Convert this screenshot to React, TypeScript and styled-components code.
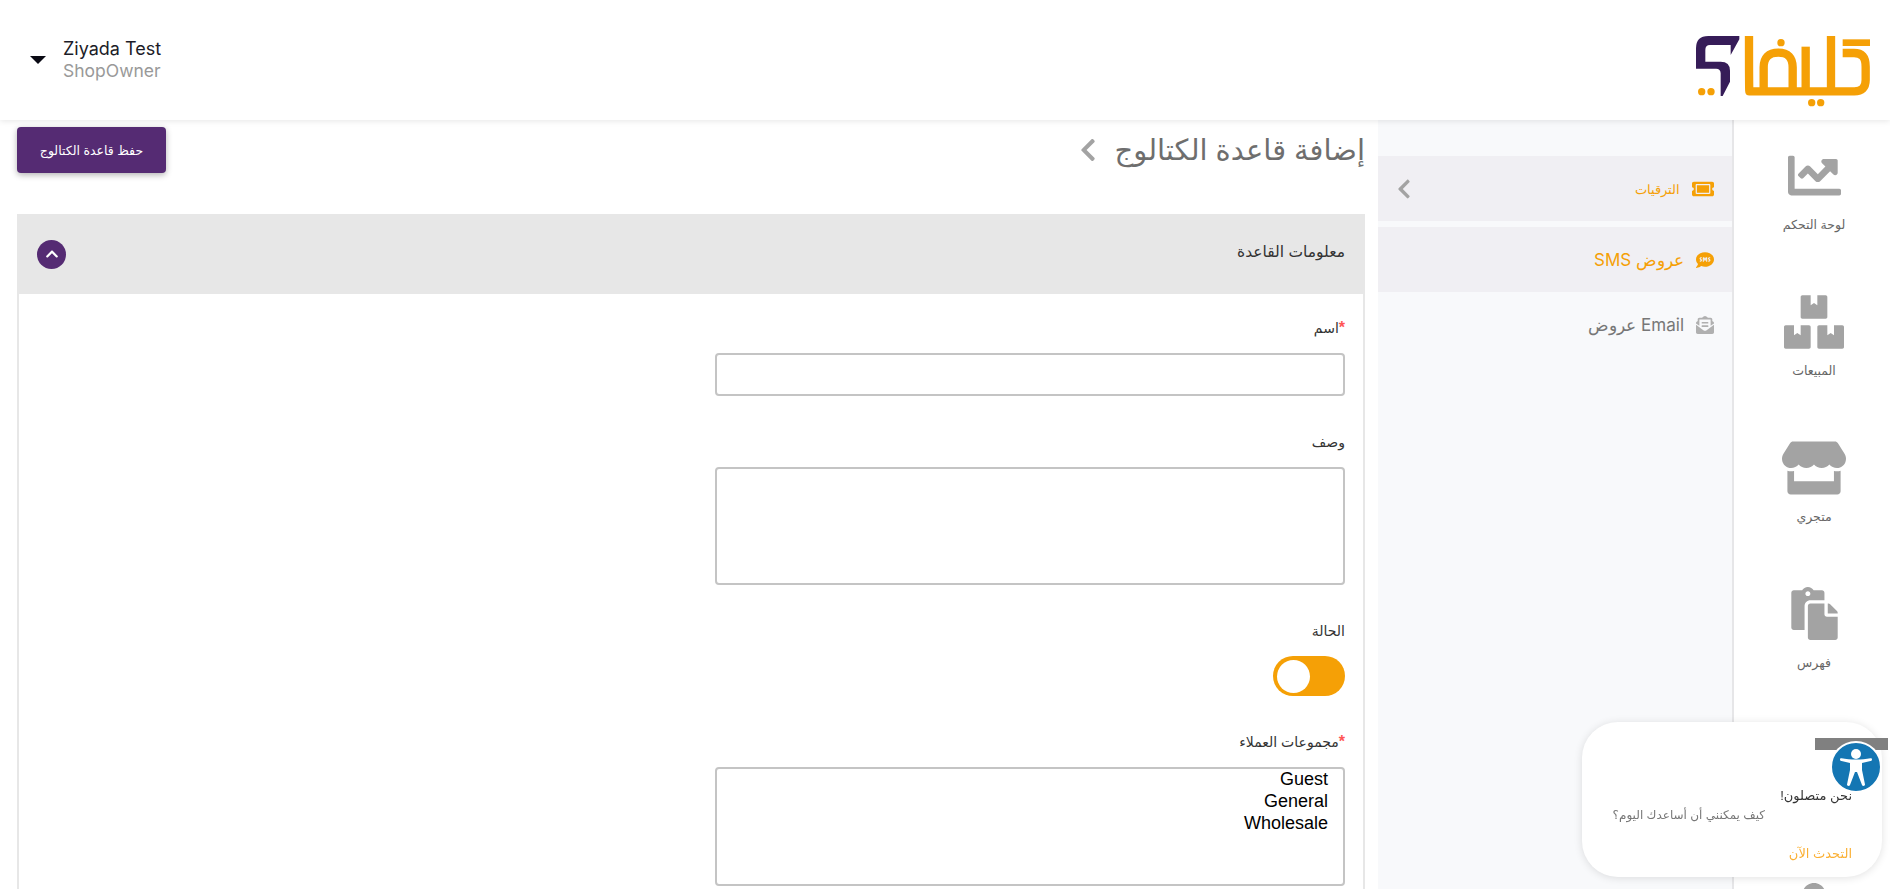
import React from "react";
import styled, { createGlobalStyle } from "styled-components";
import {
  FaBoxes,
  FaChartLine,
  FaChevronLeft,
  FaChevronUp,
  FaEnvelopeOpenText,
  FaPaste,
  FaSms,
  FaStore,
  FaTicketAlt,
  FaUsers,
} from "react-icons/fa";

const ORANGE = "#f5a006";
const PURPLE = "#552b73";

const GlobalStyle = createGlobalStyle`
  html, body {
    margin: 0;
    height: 100%;
    overflow: hidden;
    background: #fff;
    font-family: "Liberation Sans", "DejaVu Sans", sans-serif;
  }
  * { box-sizing: border-box; }
`;

const Page = styled.div`
  height: 889px;
  display: flex;
  flex-direction: column;
  overflow: hidden;
`;

const Header = styled.header`
  height: 120px;
  flex: none;
  display: flex;
  align-items: center;
  justify-content: space-between;
  padding: 0 0 0 30px;
  background: #fff;
  box-shadow: 0 1px 6px rgba(0, 0, 0, 0.1);
  position: relative;
  z-index: 2;
`;

const LogoWrap = styled.div`
  margin-top: 10px;
  svg {
    display: block;
  }
`;

const UserMenu = styled.div`
  display: flex;
  align-items: center;
  gap: 17px;
`;

const Caret = styled.span`
  width: 0;
  height: 0;
  border-left: 8px solid transparent;
  border-right: 8px solid transparent;
  border-top: 8px solid #0a0a14;
`;

const UserText = styled.div`
  direction: ltr;
  font-family: Inter, "Liberation Sans", sans-serif;
  line-height: 22px;
`;

const UserName = styled.div`
  font-size: 18px;
  color: #1c1c28;
`;

const UserRole = styled.div`
  font-size: 17.5px;
  color: #999;
`;

const Body = styled.div`
  flex: 1;
  min-height: 0;
  display: flex;
`;

const Rail = styled.nav`
  width: 158px;
  flex: none;
  padding-left: 4px;
  border-left: 2px solid #e6e6e8;
  overflow: hidden;
`;

const RailItem = styled.a`
  height: 146px;
  padding-top: 29px;
  display: flex;
  flex-direction: column;
  align-items: center;
  gap: 13px;
`;

const RailIcon = styled.span`
  height: 53px;
  display: flex;
  align-items: center;
  justify-content: center;
  color: #a3a3a3;
`;

const RailLabel = styled.span`
  height: 20px;
  line-height: 20px;
  font-size: 12.5px;
  color: #666;
`;

const SubNav = styled.aside`
  width: 354px;
  flex: none;
  padding-top: 36px;
  display: flex;
  flex-direction: column;
  background: #f8f9fb;
`;

const SubItem = styled.a<{ $active?: boolean; $small?: boolean }>`
  height: 65px;
  flex: none;
  display: flex;
  align-items: center;
  gap: 12px;
  padding: 0 18px 0 15px;
  background: ${(p) => (p.$active ? "#f0eff3" : "transparent")};
  color: ${(p) => (p.$active ? ORANGE : "#777")};
  font-family: Inter, "Liberation Sans", sans-serif;
  font-size: ${(p) => (p.$small ? "13px" : "17px")};
  &:first-child {
    margin-bottom: 6px;
  }
  &:last-child {
    height: 66px;
  }
  svg {
    flex: none;
    color: ${(p) => (p.$active ? ORANGE : "#b0b0b0")};
  }
`;

const SubChevron = styled(FaChevronLeft)`
  margin-right: auto;
  && {
    color: #a3a3a3;
  }
`;

const Main = styled.main`
  flex: 1;
  min-width: 0;
  padding: 0 13px 0 17px;
  overflow: hidden;
  background: #fff;
`;

const TitleRow = styled.div`
  height: 94px;
  display: flex;
  justify-content: space-between;
  align-items: flex-start;
`;

const Title = styled.h1`
  margin: 12px 0 0;
  display: flex;
  align-items: center;
  gap: 14px;
  font-size: 29px;
  line-height: 36px;
  font-weight: 400;
  color: #6e6e6e;
  svg {
    color: #a3a3a3;
  }
`;

const SaveButton = styled.button`
  width: 149px;
  height: 46px;
  margin-top: 7px;
  border: 0;
  border-radius: 4px;
  background: ${PURPLE};
  color: #fff;
  font-family: inherit;
  font-size: 12.5px;
  box-shadow: 0 2px 6px rgba(0, 0, 0, 0.3);
`;

const Card = styled.section`
  border: 2px solid #e7e7e7;
  border-top: 0;
`;

const CardHeader = styled.div`
  height: 80px;
  margin: 0 -2px;
  padding: 0 20px;
  display: flex;
  align-items: center;
  justify-content: space-between;
  background: #e7e7e7;
`;

const CardTitle = styled.span`
  padding-bottom: 5px;
  font-size: 15.5px;
  color: #333;
`;

const Collapse = styled.span`
  width: 29px;
  height: 29px;
  border-radius: 50%;
  background: ${PURPLE};
  color: #fff;
  display: flex;
  align-items: center;
  justify-content: center;
  font-size: 14px;
`;

const CardBody = styled.div`
  padding: 24px 18px 40px;
`;

const Field = styled.div`
  width: 630px;
  margin-bottom: 36px;
`;

const Label = styled.label`
  display: block;
  height: 20px;
  line-height: 20px;
  margin-bottom: 15px;
  font-size: 14px;
  color: #333;
`;

const Required = styled.span`
  color: #f55;
  font-size: 16px;
  font-weight: 700;
`;

const TextInput = styled.input`
  display: block;
  width: 100%;
  height: 43px;
  border: 2px solid #c4c4c4;
  border-radius: 4px;
  background: #fff;
`;

const TextArea = styled.textarea`
  display: block;
  width: 100%;
  height: 118px;
  border: 2px solid #c4c4c4;
  border-radius: 4px;
  resize: none;
`;

const Toggle = styled.span`
  width: 72px;
  height: 40px;
  padding: 3.5px 4px;
  display: flex;
  justify-content: flex-end;
  border-radius: 20px;
  background: ${ORANGE};
`;

const Thumb = styled.span`
  width: 33px;
  height: 33px;
  border-radius: 50%;
  background: #fff;
`;

const ListBox = styled.select`
  display: block;
  width: 100%;
  height: 119px;
  padding: 0 13px;
  border: 2px solid #c4c4c4;
  border-radius: 4px;
  background: #fff;
  font-family: "Liberation Sans", sans-serif;
  font-size: 18px;
  line-height: 22px;
  color: #000;
  overflow: hidden;
  option {
    min-height: 22px;
    padding: 0 2px;
  }
`;

const Chat = styled.div`
  position: fixed;
  left: 1582px;
  top: 722px;
  width: 300px;
  height: 155px;
  padding: 64px 30px 0;
  border-radius: 36px;
  background: #fff;
  box-shadow: 0 1px 8px rgba(0, 0, 0, 0.12);
  z-index: 5;
`;

const ChatTitle = styled.div`
  font-size: 13px;
  line-height: 20px;
  color: #333;
`;

const ChatText = styled.div`
  margin: 0 87px 0 -10px;
  font-size: 12px;
  line-height: 18px;
  white-space: nowrap;
  color: #777;
`;

const ChatLink = styled.a`
  display: block;
  margin-top: 20px;
  font-size: 13px;
  line-height: 20px;
  color: #fbb034;
`;

const GrayBar = styled.div`
  position: fixed;
  left: 1815px;
  top: 738px;
  width: 73px;
  height: 12px;
  background: #808080;
  z-index: 6;
`;

const AccessButton = styled.div`
  position: fixed;
  left: 1830px;
  top: 741px;
  width: 52px;
  height: 52px;
  border: 2px solid #fff;
  border-radius: 50%;
  background: #1476b3;
  z-index: 7;
  svg {
    display: block;
  }
`;

// hand traced from the reference, the wordmark is not text in a font
const Logo = () => (
  <svg width="210" height="90" viewBox="0 0 630 270">
    <g fill="none" stroke={ORANGE} strokeWidth="25">
      <path d="M488 99H522Q557 99 557 140V180Q557 214 523 214H208Q207 214 207 48" />
      <path d="M251 214V142Q251 98 295 98Q338 98 338 142V214" />
      <path d="M377 214V80" />
      <path d="M453 214V48" />
    </g>
    <rect x="488" y="58" width="82" height="20" fill={ORANGE} />
    <g fill={ORANGE}>
      <circle cx="303" cy="68" r="11" />
      <circle cx="395" cy="248" r="11" />
      <circle cx="422" cy="248" r="11" />
      <circle cx="65" cy="215" r="11" />
      <circle cx="93" cy="215" r="11" />
    </g>
    <path
      d="M85 48H178V58L152 105V75H90Q76 75 76 90V125H122Q150 125 150 152V185L128 228H122V160Q122 146 108 146H48V85Q48 48 85 48Z"
      fill="#361c58"
    />
  </svg>
);

const AccessIcon = () => (
  <svg width="48" height="48" viewBox="0 0 48 48">
    <circle cx="24" cy="11" r="5" fill="#fff" />
    <path
      d="M8 16.5C8 15.5 8.6 15 9.5 15.2C18 17 30 17 38.5 15.2C39.4 15 40 15.5 40 16.5C40 17.4 39.4 17.9 38.5 18.1L30 20V27L33 41.5C33.2 43 30.5 43.5 30 42L25 29H23L18 42C17.5 43.5 14.8 43 15 41.5L18 27V20L9.5 18.1C8.6 17.9 8 17.4 8 16.5Z"
      fill="#fff"
    />
  </svg>
);

const App: React.FC = () => (
  <Page dir="rtl">
    <GlobalStyle />
    <Header>
      <LogoWrap>
        <Logo />
      </LogoWrap>
      <UserMenu dir="ltr">
        <Caret />
        <UserText>
          <UserName>Ziyada Test</UserName>
          <UserRole>ShopOwner</UserRole>
        </UserText>
      </UserMenu>
    </Header>
    <Body>
      <Rail>
        <RailItem>
          <RailIcon>
            <FaChartLine size={53} />
          </RailIcon>
          <RailLabel>لوحة التحكم</RailLabel>
        </RailItem>
        <RailItem>
          <RailIcon>
            <FaBoxes size={60} />
          </RailIcon>
          <RailLabel>المبيعات</RailLabel>
        </RailItem>
        <RailItem>
          <RailIcon>
            <FaStore size={64} />
          </RailIcon>
          <RailLabel>متجري</RailLabel>
        </RailItem>
        <RailItem>
          <RailIcon>
            <FaPaste size={53} />
          </RailIcon>
          <RailLabel>فهرس</RailLabel>
        </RailItem>
        <RailItem />
        <RailItem>
          <RailIcon>
            <FaUsers size={66} />
          </RailIcon>
        </RailItem>
      </Rail>
      <SubNav>
        <SubItem $active $small>
          <FaTicketAlt size={22} />
          <span>الترقيات</span>
          <SubChevron size={22} />
        </SubItem>
        <SubItem $active>
          <FaSms size={18} />
          <span>عروض SMS</span>
        </SubItem>
        <SubItem>
          <FaEnvelopeOpenText size={18} />
          <span>Email عروض</span>
        </SubItem>
      </SubNav>
      <Main>
        <TitleRow>
          <Title>
            إضافة قاعدة الكتالوج
            <FaChevronLeft size={26} />
          </Title>
          <SaveButton>حفظ قاعدة الكتالوج</SaveButton>
        </TitleRow>
        <Card>
          <CardHeader>
            <CardTitle>معلومات القاعدة</CardTitle>
            <Collapse>
              <FaChevronUp />
            </Collapse>
          </CardHeader>
          <CardBody>
            <Field>
              <Label>
                <Required>*</Required>اسم
              </Label>
              <TextInput />
            </Field>
            <Field>
              <Label>وصف</Label>
              <TextArea />
            </Field>
            <Field>
              <Label>الحالة</Label>
              <Toggle>
                <Thumb />
              </Toggle>
            </Field>
            <Field>
              <Label>
                <Required>*</Required>مجموعات العملاء
              </Label>
              <ListBox multiple>
                <option>Guest</option>
                <option>General</option>
                <option>Wholesale</option>
              </ListBox>
            </Field>
          </CardBody>
        </Card>
      </Main>
    </Body>
    <Chat>
      <ChatTitle>نحن متصلون!</ChatTitle>
      <ChatText>كيف يمكنني أن أساعدك اليوم؟</ChatText>
      <ChatLink>التحدث الآن</ChatLink>
    </Chat>
    <GrayBar />
    <AccessButton>
      <AccessIcon />
    </AccessButton>
  </Page>
);

export default App;
